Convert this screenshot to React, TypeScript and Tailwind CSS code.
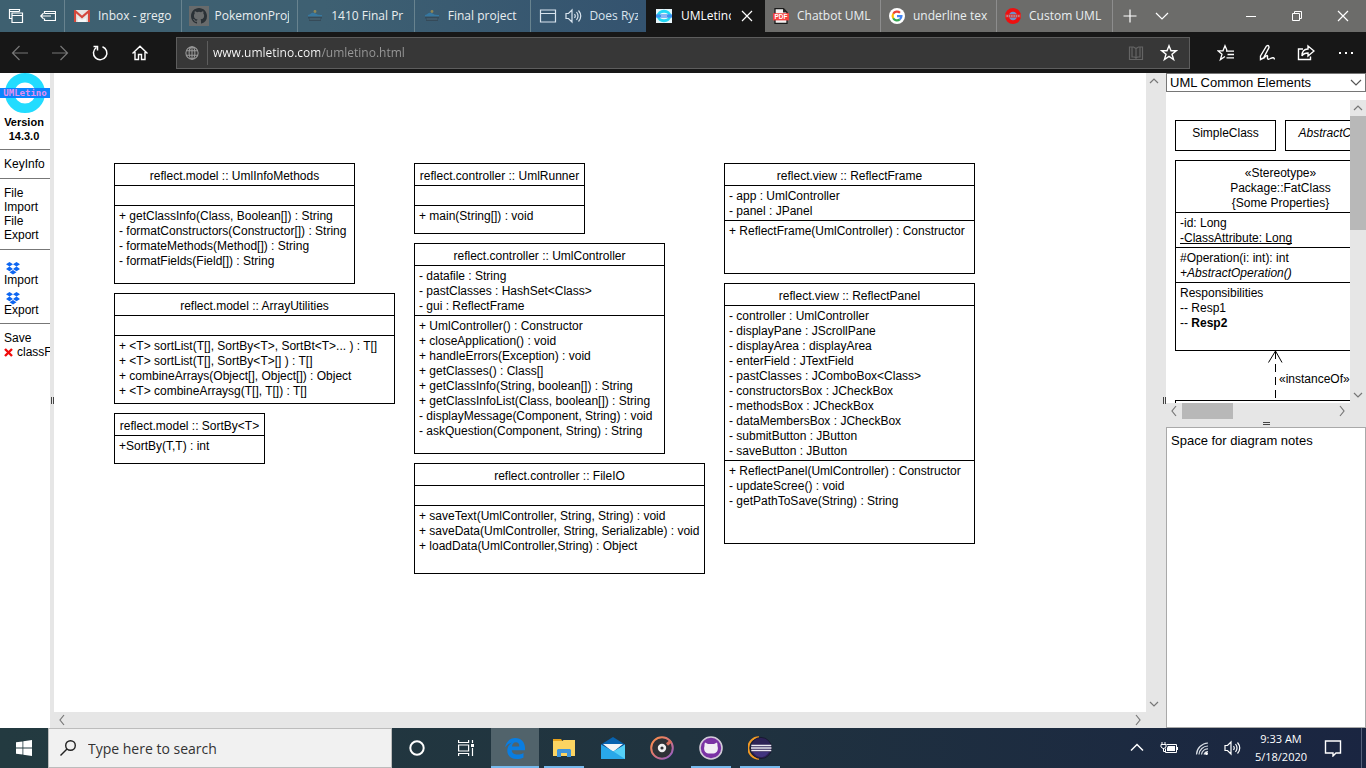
import type { ReactNode } from "react";

type Align = "left" | "center";
type UmlNode = {
  title: string;
  sections: string[][];
  place: string;
};

const nodes: UmlNode[] = [
  {
    title: "reflect.model :: UmlInfoMethods",
    place: "left-[60px] top-[90px] w-[241px] h-[121px]",
    sections: [
      [],
      [
        "+ getClassInfo(Class, Boolean[]) : String",
        "- formatConstructors(Constructor[]) : String",
        "- formateMethods(Method[]) : String",
        "- formatFields(Field[]) : String",
      ],
    ],
  },
  {
    title: "reflect.model :: ArrayUtilities",
    place: "left-[60px] top-[220px] w-[281px] h-[111px]",
    sections: [
      [],
      [
        "+ <T> sortList(T[], SortBy<T>, SortBt<T>... ) : T[]",
        "+ <T> sortList(T[], SortBy<T>[] ) : T[]",
        "+ combineArrays(Object[], Object[]) : Object",
        "+ <T> combineArraysg(T[], T[]) : T[]",
      ],
    ],
  },
  {
    title: "reflect.model :: SortBy<T>",
    place: "left-[60px] top-[340px] w-[151px] h-[51px]",
    sections: [["+SortBy(T,T) : int"]],
  },
  {
    title: "reflect.controller :: UmlRunner",
    place: "left-[360px] top-[90px] w-[171px] h-[71px]",
    sections: [[], ["+ main(String[]) : void"]],
  },
  {
    title: "reflect.controller :: UmlController",
    place: "left-[360px] top-[170px] w-[251px] h-[211px]",
    sections: [
      ["- datafile : String", "- pastClasses : HashSet<Class>", "- gui : ReflectFrame"],
      [
        "+ UmlController() : Constructor",
        "+ closeApplication() : void",
        "+ handleErrors(Exception) : void",
        "+ getClasses() : Class[]",
        "+ getClassInfo(String, boolean[]) : String",
        "+ getClassInfoList(Class, boolean[]) : String",
        "- displayMessage(Component, String) : void",
        "- askQuestion(Component, String) : String",
      ],
    ],
  },
  {
    title: "reflect.controller :: FileIO",
    place: "left-[360px] top-[390px] w-[291px] h-[111px]",
    sections: [
      [],
      [
        "+ saveText(UmlController, String, String) : void",
        "+ saveData(UmlController, String, Serializable) : void",
        "+ loadData(UmlController,String) : Object",
      ],
    ],
  },
  {
    title: "reflect.view :: ReflectFrame",
    place: "left-[670px] top-[90px] w-[251px] h-[111px]",
    sections: [
      ["- app : UmlController", "- panel : JPanel"],
      ["+ ReflectFrame(UmlController) : Constructor"],
    ],
  },
  {
    title: "reflect.view :: ReflectPanel",
    place: "left-[670px] top-[210px] w-[251px] h-[261px]",
    sections: [
      [
        "- controller : UmlController",
        "- displayPane : JScrollPane",
        "- displayArea : displayArea",
        "- enterField : JTextField",
        "- pastClasses : JComboBox<Class>",
        "- constructorsBox : JCheckBox",
        "- methodsBox : JCheckBox",
        "- dataMembersBox : JCheckBox",
        "- submitButton : JButton",
        "- saveButton : JButton",
      ],
      [
        "+ ReflectPanel(UmlController) : Constructor",
        "- updateScree() : void",
        "- getPathToSave(String) : String",
      ],
    ],
  },
];

function Section({ children, align = "left" }: { children?: ReactNode; align?: Align }) {
  return (
    <div
      className={
        align === "center"
          ? "px-1 pt-[5px] pb-px text-center"
          : "min-h-5 border-t border-black px-1 pt-[3px] pb-px"
      }
    >
      {children}
    </div>
  );
}

function ClassBox({ node }: { node: UmlNode }) {
  return (
    <article
      className={`absolute border border-black bg-white text-xs leading-[15px] whitespace-nowrap ${node.place}`}
    >
      <Section align="center">{node.title}</Section>
      {node.sections.map((lines, i) => (
        <Section key={i}>
          {lines.map((line) => (
            <p key={line}>{line}</p>
          ))}
        </Section>
      ))}
    </article>
  );
}

type Dir = "up" | "down" | "left" | "right";
const arrows: Record<Dir, string> = {
  up: "M4 10 8 6l4 4",
  down: "M4 6l4 4 4-4",
  left: "M10 3 6 8l4 5",
  right: "M6 3l4 5-4 5",
};

function Arrow({ dir, label }: { dir: Dir; label: string }) {
  return (
    <button aria-label={label} className="size-4 shrink-0">
      <svg viewBox="0 0 16 16" className="size-4" fill="none" stroke="#777" strokeWidth="1.2">
        <path d={arrows[dir]} />
      </svg>
    </button>
  );
}

function Tab({ icon, title, tone }: { icon: ReactNode; title: string; tone: string }) {
  return (
    <button className={`flex h-8 items-center border-r pr-2 ${tone}`}>
      <span className="mr-2 flex w-4 shrink-0 justify-center">{icon}</span>
      <span className="min-w-0 flex-1 overflow-hidden text-left whitespace-nowrap">{title}</span>
    </button>
  );
}

const blueTab = "min-w-0 flex-1 border-[#68838f] pl-[9px]";
const grayTab = "w-[116px] shrink-0 border-[#8d8d8d] bg-[#6c6c6a] pl-2";

function Gmail() {
  return (
    <svg viewBox="0 0 16 12" className="h-3 w-4">
      <path d="M1 0h14v12H1z" fill="#e8e6e4" />
      <path d="M1 12V1l7 6 7-6v11" fill="none" stroke="#d5483c" strokeWidth="2.2" />
      <path d="M4 12V8l4 2 4-2v4z" fill="#f7f7f7" />
    </svg>
  );
}

const catHead =
  "M8 0C3.58 0 0 3.58 0 8c0 3.54 2.29 6.53 5.47 7.59.4.07.55-.17.55-.38v-1.49c-2.01.37-2.53-.49-2.69-.94-.09-.23-.48-.94-.82-1.13-.28-.15-.68-.52-.01-.53.63-.01 1.08.58 1.23.82.72 1.21 1.87.87 2.33.66.07-.52.28-.87.51-1.07-1.78-.2-3.64-.89-3.64-3.95 0-.87.31-1.59.82-2.15-.08-.2-.36-1.02.08-2.12 0 0 .67-.21 2.2.82a7.7 7.7 0 0 1 4 0c1.53-1.04 2.2-.82 2.2-.82.44 1.1.16 1.92.08 2.12.51.56.82 1.27.82 2.15 0 3.07-1.87 3.75-3.65 3.95.29.25.54.73.54 1.48v2.2c0 .21.15.46.55.38A8.01 8.01 0 0 0 16 8c0-4.42-3.58-8-8-8z";

function GithubIcon() {
  return (
    <svg viewBox="-2 -2 20 20" className="size-5 shrink-0">
      <path d="M-2-2h20v20H-2z" fill="#686b6c" />
      <path d={catHead} fill="#2a3136" />
    </svg>
  );
}

function CanvasIcon() {
  return (
    <svg viewBox="0 0 16 14" className="h-3.5 w-4 opacity-70">
      <circle cx="8" cy="2.5" r="1.4" fill="#b49a4c" />
      <path d="M1 6c3 0 3-3 6-2s3 2 8 2v1.3H1z" fill="#3583b4" />
      <path d="M1 8h14v1.5H1zM2 10.5h12V12H2z" fill="#33434f" />
      <path d="M3 10h10" stroke="#61727d" strokeWidth=".7" />
    </svg>
  );
}

function UmletIcon() {
  return (
    <svg viewBox="0 0 16 14" className="h-3.5 w-4 shrink-0">
      <path d="M0 0h16v14H0z" fill="#e9f6fb" />
      <ellipse cx="8" cy="7" rx="5.8" ry="4.8" fill="none" stroke="#22d8f5" strokeWidth="3" />
      <path d="M0 5.4h16v3.2H0z" fill="#3f8ff0" />
      <path d="M5 7h6" stroke="#a9c4f5" strokeWidth="1.4" />
    </svg>
  );
}

function PdfIcon() {
  return (
    <svg viewBox="0 0 16 16" className="size-4">
      <path d="M2 .7h8.5L14 4.2v11.1H2z" fill="#f2f2f2" stroke="#1b1b1b" strokeWidth="1.3" />
      <path d="M10 0v4.6h4.4" fill="#222" />
      <path d="M0 5.2h16v7.2H0z" fill="#f4413f" />
      <text x="8" y="11.2" fontSize="6.4" fontWeight="700" fill="#fff" textAnchor="middle" fontFamily="Liberation Sans, sans-serif">
        PDF
      </text>
    </svg>
  );
}

function GoogleIcon() {
  return (
    <svg viewBox="0 0 16 16" className="size-4">
      <circle cx="8" cy="8" r="8" fill="#fff" />
      <g fill="none" strokeWidth="2.2">
        <path d="M4.2 5.8A4.4 4.4 0 0 1 11 4.8" stroke="#ea4335" />
        <path d="M4.2 5.8a4.6 4.6 0 0 0 0 4.4" stroke="#fbbc05" />
        <path d="M4.2 10.2a4.4 4.4 0 0 0 6.6 1.2" stroke="#34a853" />
        <path d="M8 8.2h4.4a4.3 4.3 0 0 1-1.6 3.2" stroke="#4285f4" />
      </g>
    </svg>
  );
}

function CustomIcon() {
  return (
    <svg viewBox="0 0 16 16" className="size-4">
      <circle cx="8" cy="8" r="6.1" fill="#6e90c8" stroke="#ee1010" strokeWidth="3.8" />
      <path d="M0 6.2h16v3.4H0z" fill="#d8322f" />
      <path d="M1.500 8h13" stroke="#b99aa9" strokeWidth="1.6" strokeDasharray="1.5 .8" />
    </svg>
  );
}

function Glyph({ d, box = 18, className = "size-[18px]", width = 1.2 }: { d: string; box?: number; className?: string; width?: number }) {
  return (
    <svg viewBox={`0 0 ${box} ${box}`} className={className} fill="none" stroke="currentColor" strokeWidth={width}>
      <path d={d} />
    </svg>
  );
}

const speaker = "M2 6.5h2.5L8 3v12l-3.500-3.500H2zM10.500 7q1.500 2 0 4M12.500 5q3 4 0 8M14.500 3.500q4.500 5.500 0 11";

function TabBar() {
  return (
    <header className="flex h-8 shrink-0 overflow-hidden bg-[#6c6c6a] text-[12px] text-[#e9eef0]">
      <div className="flex w-[646px] shrink-0 bg-linear-to-r from-[#3e6070] via-[#3e6072] to-[#34536f]">
        <div className="flex w-[65px] shrink-0 items-center gap-4 border-r border-[#68838f] pl-2 text-white">
          <button aria-label="Tabs you've set aside">
            <Glyph box={16} className="size-4" d="M3.500 10.500h-2v-9h10v2M1.500 3.500h10M4 5.500V5h10.500v9.500H4zM4 7.500h10.500" />
          </button>
          <button aria-label="Set these tabs aside">
            <Glyph box={16} className="size-4" d="M4.500 5.500v-2h11v9h-11v-2M4.500 5.500h11M11 8H.8M3.500 5.200.8 8l2.700 2.800" />
          </button>
        </div>
        <Tab icon={<Gmail />} title="Inbox - grego" tone={blueTab} />
        <Tab icon={<GithubIcon />} title="PokemonProj" tone={blueTab} />
        <Tab icon={<CanvasIcon />} title="1410 Final Pr" tone={blueTab} />
        <Tab icon={<CanvasIcon />} title="Final project" tone={blueTab} />
        <button className="flex h-8 min-w-0 flex-1 items-center gap-[7px] px-2 text-[#d9e4ee]">
          <Glyph className="size-[18px] shrink-0" d="M1.500 3h15v12h-15zM1.500 6.500h15" />
          <Glyph className="size-[18px] shrink-0" d={speaker} />
          <span className="min-w-0 flex-1 overflow-hidden text-left whitespace-nowrap">Does Ryz</span>
        </button>
      </div>
      <div className="flex w-[119px] shrink-0 items-center bg-[#171717] pr-[11px] pl-2.5 text-white">
        <UmletIcon />
        <span className="ml-[9px] w-[50px] overflow-hidden whitespace-nowrap">UMLetino</span>
        <button aria-label="Close tab" className="ml-auto">
          <Glyph box={14} className="size-3.5" d="M2 2l10 10M12 2 2 12" />
        </button>
      </div>
      <Tab icon={<PdfIcon />} title="Chatbot UML" tone={grayTab} />
      <Tab icon={<GoogleIcon />} title="underline tex" tone={grayTab} />
      <Tab icon={<CustomIcon />} title="Custom UML" tone={grayTab} />
      <div className="flex flex-1 items-center pl-2 text-white">
        <button aria-label="New tab">
          <Glyph className="size-[18px]" d="M9 2.500v13M2.500 9h13" />
        </button>
        <button aria-label="Tab previews" className="ml-3.5">
          <Glyph className="size-[18px]" d="M3 6l6 6 6-6" />
        </button>
      </div>
      <div className="flex shrink-0 text-white">
        <button aria-label="Minimize" className="flex h-8 w-[46px] items-center justify-center">
          <Glyph box={12} className="size-3" width={1} d="M1 6.500h10" />
        </button>
        <button aria-label="Restore" className="flex h-8 w-[46px] items-center justify-center">
          <Glyph box={12} className="size-3" width={1} d="M1.500 3.500h7v7h-7zM3.500 3V1.500h7v7H9" />
        </button>
        <button aria-label="Close" className="flex h-8 w-[46px] items-center justify-center">
          <Glyph box={12} className="size-3" d="M1 1l10 10M11 1 1 11" />
        </button>
      </div>
    </header>
  );
}

const star = "M9 1.800l2 5h5.200l-4.200 3.400 1.600 5.400L9 12.400l-4.600 3.200L6 10.200 1.800 6.800H7z";

function Toolbar() {
  return (
    <nav className="flex h-[41px] shrink-0 items-center bg-[#171717] text-white">
      <div className="flex w-44 shrink-0 items-center gap-[22px] pl-[11px]">
        <button aria-label="Back" className="text-[#777]">
          <Glyph d="M17 9H2M8.500 2 1.500 9l7 7" />
        </button>
        <button aria-label="Forward" className="text-[#777]">
          <Glyph d="M1 9h15M9.500 2l7 7-7 7" />
        </button>
        <button aria-label="Refresh">
          <Glyph width={1.5} d="M11.500 2.700A6.700 6.700 0 1 1 5.300 3.500M2.500 2.500h4v4" />
        </button>
        <button aria-label="Home">
          <Glyph width={1.4} d="M1.500 9.500 9 2.200l7.500 7.300M4 8v7.500h3.500v-5h3v5H14V8" />
        </button>
      </div>
      <div className="flex h-8 min-w-0 flex-1 items-center border border-[#5d5d5d] bg-[#373737]">
        <svg viewBox="0 0 16 16" className="mx-2 size-3.5 shrink-0" fill="none" stroke="#9a9a9a" strokeWidth="1.2">
          <circle cx="8" cy="8" r="7" />
          <ellipse cx="8" cy="8" rx="3.300" ry="7" />
          <path d="M1.500 5.500h13M1.500 10.500h13M8 1v14" />
        </svg>
        <span className="h-6 w-px shrink-0 bg-[#5d5d5d]" />
        <input
          aria-label="Address"
          defaultValue="www.umletino.com/umletino.html"
          className="ml-[5px] min-w-0 flex-1 bg-[linear-gradient(90deg,#fff_107px,#9a9a9a_107px)] bg-clip-text text-[12px] text-transparent outline-none"
        />
        <button aria-label="Reading view" className="mr-4 text-[#646464]">
          <Glyph box={16} className="size-4" d="M8 3.500v11M1.500 2v12.500h13V2h-4L8 3.500 5.500 2zM4 2.500v9.500h2.500L8 13l1.500-1H12V2.500" />
        </button>
        <button aria-label="Add to favorites" className="mr-[11px]">
          <Glyph width={1.4} d={star} />
        </button>
      </div>
      <div className="flex w-44 shrink-0 items-center gap-[22px] pl-[27px]">
        <button aria-label="Favorites">
          <Glyph width={1.3} d="M10 6.500 8 1.800 6 6.800H1l4 3.400-1.600 5.400L8 12.500M9 7.200h8M10.500 10.500H17M9.500 13.800H17" />
        </button>
        <button aria-label="Add notes">
          <Glyph width={1.4} d="M3.500 12 9.500 2q2.500-1.500 2.500 1.500L6.500 14l-3 1.500zM6.500 14.500q4.500-5 4-1.500t3 1.500 4 1" />
        </button>
        <button aria-label="Share">
          <Glyph width={1.4} d="M6 5H1.500v10.500h12v-3M11 2l6 5-6 5V9Q6.500 9 5 12q0-7 6-7z" />
        </button>
        <button aria-label="More">
          <svg viewBox="0 0 18 18" className="size-[18px]" fill="currentColor">
            <path d="M2 8h2v2H2zM8 8h2v2H8zM14 8h2v2h-2z" />
          </svg>
        </button>
      </div>
    </nav>
  );
}

function Dropbox() {
  return (
    <svg viewBox="0 0 16 13" className="ml-px h-[13px] w-4" fill="#0d66f2">
      <path d="M4.500 0 8 2.300 4.500 4.600 1 2.300zM11.500 0 15 2.300l-3.500 2.300L8 2.300zM4.500 4.600 8 6.900 4.500 9.200 1 6.900zM11.500 4.600 15 6.900l-3.500 2.300L8 6.900zM8 8l3.500 2.300L8 12.600l-3.500-2.300z" />
    </svg>
  );
}

function Sidebar() {
  return (
    <aside className="w-[50px] shrink-0 overflow-hidden text-xs leading-[14px] whitespace-nowrap">
      <svg viewBox="0 0 50 40" className="block h-10 w-[50px]">
        <circle cx="25" cy="20" r="15.300" fill="none" stroke="#22dcff" strokeWidth="9.400" />
        <path d="M0 15h50v10H0z" fill="#0a84ff" />
        <text x="25" y="23" textAnchor="middle" fontSize="9" fontWeight="700" fill="#e58fee" fontFamily="DejaVu Sans Mono, monospace">
          UMLetino
        </text>
      </svg>
      <p className="border-b border-[#777] pt-0.5 pr-0.5 pb-1.5 text-center text-[11px] font-bold">
        Version
        <br />
        14.3.0
      </p>
      <div className="border-b border-[#777] px-1 py-[7px]">
        <a href="#keys">KeyInfo</a>
      </div>
      <div className="border-b border-[#777] px-1 py-[7px] whitespace-normal">
        <a href="#import" className="block">File Import</a>
        <a href="#export" className="block">File Export</a>
      </div>
      <div className="border-b border-[#777] px-1 pt-3 pb-1.5">
        <a href="#dropbox-import" className="block pb-[5px]">
          <Dropbox />
          <span className="-mt-0.5 block">Import</span>
        </a>
        <a href="#dropbox-export" className="block">
          <Dropbox />
          <span className="-mt-0.5 block">Export</span>
        </a>
      </div>
      <div className="px-1 py-[7px]">
        <a href="#save" className="block">Save</a>
        <div className="flex items-center gap-1">
          <button aria-label="Delete classF" className="shrink-0">
            <svg viewBox="0 0 9 9" className="size-[9px]" stroke="#f00b0b" strokeWidth="2.400">
              <path d="M1 1l7 7M8 1 1 8" />
            </svg>
          </button>
          <a href="#classF">classF</a>
        </div>
      </div>
    </aside>
  );
}

function Splitter() {
  return (
    <div className="flex w-1 shrink-0 items-center justify-center gap-px bg-[#e6e6e6]">
      <span className="h-[7px] w-px bg-[#444]" />
      <span className="h-[7px] w-px bg-[#444]" />
    </div>
  );
}

function Diagram() {
  return (
    <main className="flex min-w-0 flex-1 flex-col bg-[#e6e6e6]">
      <div className="flex min-h-0 flex-1">
        <div className="relative min-w-0 flex-1 overflow-hidden bg-white">
          {nodes.map((n) => (
            <ClassBox key={n.title} node={n} />
          ))}
        </div>
        <div className="flex w-4 shrink-0 flex-col justify-between">
          <Arrow dir="up" label="Scroll diagram up" />
          <Arrow dir="down" label="Scroll diagram down" />
        </div>
      </div>
      <div className="mr-4 flex h-4 shrink-0 justify-between">
        <Arrow dir="left" label="Scroll diagram left" />
        <Arrow dir="right" label="Scroll diagram right" />
      </div>
    </main>
  );
}

function Palette() {
  return (
    <aside className="flex w-[200px] shrink-0 flex-col bg-[#e6e6e6]">
      <div className="relative h-[19px] shrink-0 bg-white">
        <select
          aria-label="Palette"
          className="block h-[19px] w-full appearance-none border border-[#767676] bg-white pl-[3px] text-[13px] leading-4 outline-none"
        >
          <option>UML Common Elements</option>
        </select>
        <svg viewBox="0 0 12 8" className="pointer-events-none absolute top-1.5 right-1 h-2 w-3" fill="none" stroke="#555" strokeWidth="1.200">
          <path d="M1 1l5 5 5-5" />
        </svg>
      </div>
      <div className="flex h-[311px] shrink-0 bg-white pt-2">
        <div className="relative min-w-0 flex-1 overflow-hidden text-xs leading-[15px] whitespace-nowrap">
          <div className="absolute top-5 left-[9px] h-[31px] w-[101px] border border-black pt-[5px] text-center">
            SimpleClass
          </div>
          <div className="absolute top-5 left-[119px] h-[31px] w-[101px] border border-black pt-[5px] text-center italic">
            AbstractClass
          </div>
          <article className="absolute top-[60px] left-[9px] h-[191px] w-[211px] border border-black">
            <div className="px-1 pt-[5px] pb-px text-center">
              <p>«Stereotype»</p>
              <p>Package::FatClass</p>
              <p>{"{Some Properties}"}</p>
            </div>
            <Section>
              <p>-id: Long</p>
              <p className="underline underline-offset-1 [text-decoration-skip-ink:none]">-ClassAttribute: Long</p>
            </Section>
            <Section>
              <p>#Operation(i: int): int</p>
              <p className="italic">+AbstractOperation()</p>
            </Section>
            <Section>
              <p>Responsibilities</p>
              <p>-- Resp1</p>
              <p>
                -- <b>Resp2</b>
              </p>
            </Section>
          </article>
          <svg viewBox="0 0 16 50" className="absolute top-[250px] left-[101px] h-[50px] w-4" fill="none" stroke="#000">
            <path d="M1.500 12.500 8.500 1l6.500 11.500" />
            <path d="M8.500 1v50" strokeDasharray="8 5" />
          </svg>
          <span className="absolute top-[272px] left-[113px]">«instanceOf»</span>
          <div className="absolute top-[300px] left-[9px] h-8 w-[211px] border border-black" />
        </div>
        <div className="flex w-4 shrink-0 flex-col bg-[#e6e6e6]">
          <Arrow dir="up" label="Scroll palette up" />
          <div className="h-[114px] bg-[#b8b8b8]" />
          <div className="flex-1" />
          <Arrow dir="down" label="Scroll palette down" />
        </div>
      </div>
      <div className="mr-4 flex h-4 shrink-0">
        <Arrow dir="left" label="Scroll palette left" />
        <div className="w-[51px] bg-[#b8b8b8]" />
        <div className="flex-1" />
        <Arrow dir="right" label="Scroll palette right" />
      </div>
      <div className="flex h-2 shrink-0 flex-col items-center justify-center gap-px">
        <span className="h-px w-[7px] bg-[#444]" />
        <span className="h-px w-[7px] bg-[#444]" />
      </div>
      <textarea
        aria-label="Diagram notes"
        defaultValue="Space for diagram notes"
        className="min-h-0 flex-1 resize-none border border-[#a9a9a9] bg-white px-1 pt-[5px] text-[13px] leading-4 outline-none"
      />
    </aside>
  );
}

function TaskApp({ label, active, bar, children }: { label: string; active?: boolean; bar?: boolean; children: ReactNode }) {
  return (
    <button
      aria-label={label}
      className={`relative flex h-10 w-12 items-center justify-center ${active ? "bg-[#51636b]" : ""}`}
    >
      {children}
      {(active || bar) && (
        <span className={`absolute bottom-0 h-0.5 bg-[#76b9ed] ${active ? "inset-x-0" : "inset-x-1"}`} />
      )}
    </button>
  );
}

function Taskbar() {
  return (
    <footer className="flex h-10 shrink-0 items-center bg-linear-to-r from-[#233a40] via-[#20333f] to-[#1a2541] text-white">
      <button aria-label="Start" className="flex h-10 w-12 shrink-0 items-center justify-center">
        <svg viewBox="0 0 16 16" className="size-4" fill="#fff">
          <path d="M0 2.300 6.500 1.400v6.200H0zM7.300 1.300 16 0v7.600H7.300zM0 8.400h6.500v6.200L0 13.700zM7.300 8.400H16V16l-8.700-1.300z" />
        </svg>
      </button>
      <label className="flex h-10 w-[344px] shrink-0 items-center gap-3 border border-[#bcbcbc] bg-[#f1f1f1] pl-[11px] text-[#222]">
        <svg viewBox="0 0 16 16" className="size-4 shrink-0" fill="none" stroke="currentColor" strokeWidth="1.400">
          <circle cx="10.500" cy="5.500" r="4.800" />
          <path d="M7 9 .5 15.500" />
        </svg>
        <input
          aria-label="Search"
          placeholder="Type here to search"
          className="min-w-0 flex-1 bg-transparent text-[14px] outline-none placeholder:text-[#333]"
        />
      </label>
      <div className="flex shrink-0 gap-px pl-px">
        <TaskApp label="Cortana">
          <svg viewBox="0 0 16 16" className="size-4" fill="none" stroke="#fff" strokeWidth="2">
            <circle cx="8" cy="8" r="6.700" />
          </svg>
        </TaskApp>
        <TaskApp label="Task View">
          <svg viewBox="0 0 16 16" className="size-4" fill="none" stroke="#fff" strokeWidth="1.200">
            <path d="M.6 0v2.500h10V0M.6 5h10v6H.6zM.6 16v-2.500h10V16M14.500 0v3M14.500 8v8" />
            <path d="M13 4h3v3h-3z" fill="#fff" stroke="none" />
          </svg>
        </TaskApp>
        <TaskApp label="Microsoft Edge" active>
          <svg viewBox="0 0 20 21" className="h-[21px] w-5">
            <path d="M0 9.500C1 3.500 5 0 10.200 0 16.500 0 20 4.600 20 10v2.300H6.800c.2 3 2.700 4.300 5.700 4.300 2.300 0 4.300-.6 6-1.700v4.500c-2 1.100-4.300 1.600-6.700 1.600C5.800 21 2.300 17.600 2.300 12.800c0-3.900 2-6.700 5.200-8.300C4.400 5 1.700 6.800 0 9.500zM7 8.400h7.300c0-2.600-1.200-4.100-3.400-4.100S7.200 6 7 8.400z" fill="#0a7de0" />
          </svg>
        </TaskApp>
        <TaskApp label="File Explorer" bar>
          <svg viewBox="0 0 22 18" className="h-[18px] w-[22px]">
            <path d="M0 0h8l1.500 2H0z" fill="#e8a21c" />
            <path d="M0 2h9.500l1-1H22v16H0z" fill="#fcd462" />
            <path d="M4 18v-7l1-1h12l1 1v7h-4v-4H8v4z" fill="#3f95dc" />
            <path d="M8 14h6v3H8z" fill="#fcd462" />
          </svg>
          <span className="absolute right-1 bottom-0 h-0.5 w-[9px] bg-[#5585ad]" />
        </TaskApp>
        <TaskApp label="Mail">
          <svg viewBox="0 0 24 22" className="h-[22px] w-6">
            <path d="M0 7.500 12 0l12 7.500z" fill="#0863b0" />
            <path d="M0 7h24v7H0z" fill="#0b4f91" />
            <path d="M2 7h20l-10 8z" fill="#f4f6f8" />
            <path d="M0 7.500V22h24V7.500L12.500 14.500z" fill="#29a8ea" />
            <path d="M24 7.500V22L12.500 14.500z" fill="#55d0f7" />
          </svg>
        </TaskApp>
        <TaskApp label="Music">
          <svg viewBox="0 0 24 24" className="size-6" fill="none">
            <defs>
              <linearGradient id="ring" x1="0" y1="0" x2="1" y2="1">
                <stop offset="0" stopColor="#ff9248" />
                <stop offset=".5" stopColor="#d97479" />
                <stop offset="1" stopColor="#8a5cd0" />
              </linearGradient>
            </defs>
            <circle cx="12" cy="12" r="10.800" fill="#2f3236" stroke="url(#ring)" strokeWidth="2" />
            <path d="M17 8.500 21 5" stroke="#d9705c" strokeWidth="3" />
            <circle cx="12" cy="12" r="2.900" stroke="#f0f0f0" strokeWidth="2.600" />
          </svg>
        </TaskApp>
        <TaskApp label="GitHub Desktop" bar>
          <svg viewBox="0 0 24 24" className="size-6">
            <circle cx="12" cy="12" r="11" fill="#7a32a4" stroke="#d2cbd8" strokeWidth="1.600" />
            <path d="M6 6.500 9 8h6l3-1.500c.7 2 .5 3 .5 3.500 1 3 .2 7-4 7.500h-5c-4.200-.5-5-4.500-4-7.500 0-.5-.2-1.500.5-3.500z" fill="#f2eef5" />
          </svg>
        </TaskApp>
        <TaskApp label="Eclipse" bar>
          <svg viewBox="0 0 24 24" className="size-6">
            <path d="M11 1.200a10.800 10.800 0 0 0 0 21.600" fill="none" stroke="#f39a24" strokeWidth="2" />
            <circle cx="13" cy="12" r="10.600" fill="#2c2156" stroke="#15162c" strokeWidth=".8" />
            <path d="M5 16h16q-3 5-8 5t-8-5z" fill="#41347f" />
            <path d="M3.300 8.800h20v1.500h-20zM3 11.300h20.500v1.500H3zM3.300 13.800h20v1.500h-20z" fill="#eceaf3" />
          </svg>
        </TaskApp>
      </div>
      <div className="flex-1" />
      <div className="flex shrink-0 items-center">
        <button aria-label="Show hidden icons" className="mr-3.5">
          <Glyph width={1.500} d="M3 11.500 9 5.500l6 6" />
        </button>
        <button aria-label="Battery" className="mr-[15px]">
          <svg viewBox="0 0 18 18" className="size-[18px]" fill="none" stroke="#fff">
            <path d="M6.500 5.500h10v8h-11v-4" />
            <path d="M8 7h7v5H7V9z" fill="#fff" stroke="none" />
            <path d="M1 5.500h5V8L4 9.500H3L1 8zM2 3v2M5 3v2M3.500 9.500v3h2M17.500 8v3" />
          </svg>
        </button>
        <button aria-label="Network" className="mr-3">
          <svg viewBox="0 0 18 18" className="size-[18px]" fill="none" stroke="#d9dee5" strokeWidth="1.200">
            <path d="M3.500 15.500A12 12 0 0 1 15 4M6 15.500a9 9 0 0 1 9-8.500M8.500 15.500A6 6 0 0 1 15 10M11 15.500q1-3 4-3" />
            <circle cx="13.500" cy="14.500" r="1.500" fill="#fff" stroke="none" />
          </svg>
        </button>
        <button aria-label="Volume" className="mr-2.5">
          <Glyph d={speaker} />
        </button>
        <button className="w-[60px] text-center text-[11px] leading-[18px] whitespace-nowrap">
          9:33 AM
          <br />
          5/18/2020
        </button>
        <button aria-label="Notifications" className="mr-[19px] ml-[13px]">
          <Glyph width={1.400} d="M1.500 2h15v12H12l-3 3v-3H1.500z" />
        </button>
        <span className="mr-1 h-10 w-px bg-[#56617a]" />
      </div>
    </footer>
  );
}

export default function App() {
  return (
    <div className="flex h-screen flex-col overflow-hidden bg-white font-['Open_Sans','Noto_Sans',sans-serif] text-black">
      <TabBar />
      <Toolbar />
      <div className="flex min-h-0 flex-1 font-['Liberation_Sans',Arial,sans-serif]">
        <Sidebar />
        <Splitter />
        <Diagram />
        <Splitter />
        <Palette />
      </div>
      <Taskbar />
    </div>
  );
}
